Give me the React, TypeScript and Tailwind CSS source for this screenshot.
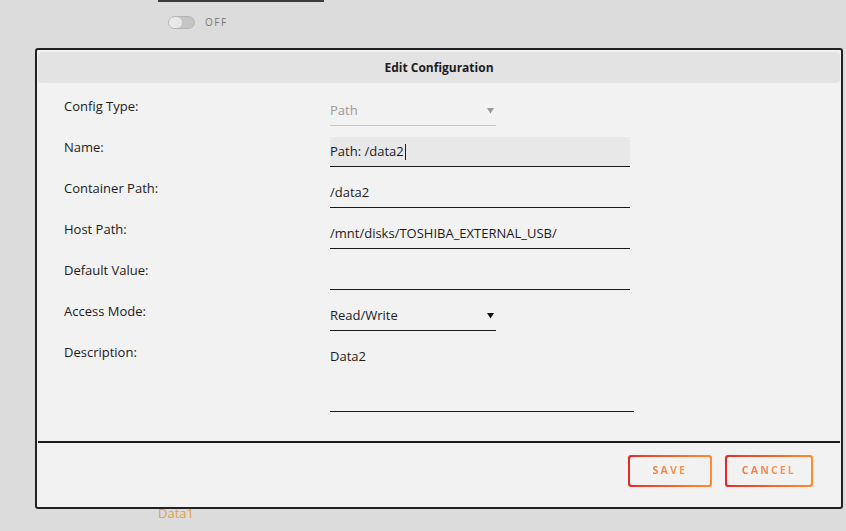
import React from "react";

const font = { fontFamily: '"Open Sans", "Liberation Sans", sans-serif' };

function Arrow({ dim }: { dim?: boolean }) {
    return (
        <svg width="7" height="7" viewBox="0 0 7 7" className="shrink-0">
            <path d="M0 1h7L3.5 6.5z" fill={dim ? "#9a9a9a" : "#111"} />
        </svg>
    );
}

function Row({ label, children }: { label: string; children: React.ReactNode }) {
    return (
        <div className="flex">
            <div className="w-[266px] shrink-0 pt-[1px] text-[13px] leading-[18px] text-[#1c1b1b]">{label}</div>
            {children}
        </div>
    );
}

function GradButton({ children }: { children: React.ReactNode }) {
    return (
        <div className="min-w-[84px] rounded-[3px] bg-gradient-to-r from-[#e22828] to-[#ff8c2f] p-[2px]">
            <div className="flex h-[28px] items-center justify-center rounded-[2px] bg-[#f2f2f2] px-[15px]">
                <span className="bg-gradient-to-r from-[#f07a3a] to-[#f59a5a] bg-clip-text text-[10.5px] font-bold tracking-[2.2px] text-transparent">
                    {children}
                </span>
            </div>
        </div>
    );
}

export default function App() {
    return (
        <div className="relative h-[531px] w-[846px] overflow-hidden bg-[#dcdcdc]" style={font}>
            {/* page behind the dialog */}
            <div className="ml-[158px] h-[2px] w-[166px] bg-[#3b3b3b]" />
            <div className="ml-[168px] mt-[13px] flex items-center gap-[10px]">
                <div className="flex h-[13px] w-[27px] items-center rounded-full border border-[#b5b5b5] bg-[#c4c4c4]">
                    <div className="h-[11px] w-[13px] rounded-full bg-[#e8e8e8]" />
                </div>
                <span className="text-[10px] tracking-[1.5px] text-[#777]">OFF</span>
            </div>
            <div className="ml-[158px] mt-[474px] text-[13px] text-[#e0a04e]">Data1</div>

            {/* dialog */}
            <div className="absolute left-[35px] top-[48px] h-[461px] w-[808px] rounded-[3px] border-2 border-[#222] bg-[#f2f2f2] px-[1px] pt-[2px]">
                <div className="flex h-[31px] items-center justify-center rounded-[4px] bg-[#e3e3e3] text-[12px] font-bold text-[#1c1b1b]">
                    Edit Configuration
                </div>
                <div className="ml-[26px] mt-[13px] flex flex-col gap-[11px]">
                    <Row label="Config Type:">
                        <div className="flex h-[30px] w-[166px] items-center justify-between border-b border-[#c8c8c8] pr-[2px] text-[13px] text-[#9a9a9a]">
                            <span>Path</span>
                            <Arrow dim />
                        </div>
                    </Row>
                    <Row label="Name:">
                        <div className="flex h-[30px] w-[300px] items-center border-b border-[#1c1b1b] bg-[#e8e8e8] text-[13px] text-[#1c1b1b]">
                            <span>Path: /data2</span>
                            <span className="ml-[1px] h-[16px] w-[1px] bg-[#1c1b1b]" />
                        </div>
                    </Row>
                    <Row label="Container Path:">
                        <div className="flex h-[30px] w-[300px] items-center border-b border-[#1c1b1b] text-[13px] text-[#1c1b1b]">
                            /data2
                        </div>
                    </Row>
                    <Row label="Host Path:">
                        <div className="flex h-[30px] w-[300px] items-center border-b border-[#1c1b1b] text-[13px] text-[#1c1b1b]">
                            /mnt/disks/TOSHIBA_EXTERNAL_USB/
                        </div>
                    </Row>
                    <Row label="Default Value:">
                        <div className="h-[30px] w-[300px] border-b border-[#1c1b1b]" />
                    </Row>
                    <Row label="Access Mode:">
                        <div className="flex h-[30px] w-[166px] items-center justify-between border-b border-[#1c1b1b] pr-[2px] text-[13px] text-[#1c1b1b]">
                            <span>Read/Write</span>
                            <Arrow />
                        </div>
                    </Row>
                    <Row label="Description:">
                        <div className="h-[70px] w-[304px] border-b border-[#1c1b1b] pt-[5px] text-[13px] text-[#1c1b1b]">
                            Data2
                        </div>
                    </Row>
                </div>
                <div className="mt-[29px] h-[2px] bg-[#1c1b1b]" />
                <div className="mr-[27px] mt-[12px] flex justify-end gap-[13px]">
                    <GradButton>SAVE</GradButton>
                    <GradButton>CANCEL</GradButton>
                </div>
            </div>
        </div>
    );
}
